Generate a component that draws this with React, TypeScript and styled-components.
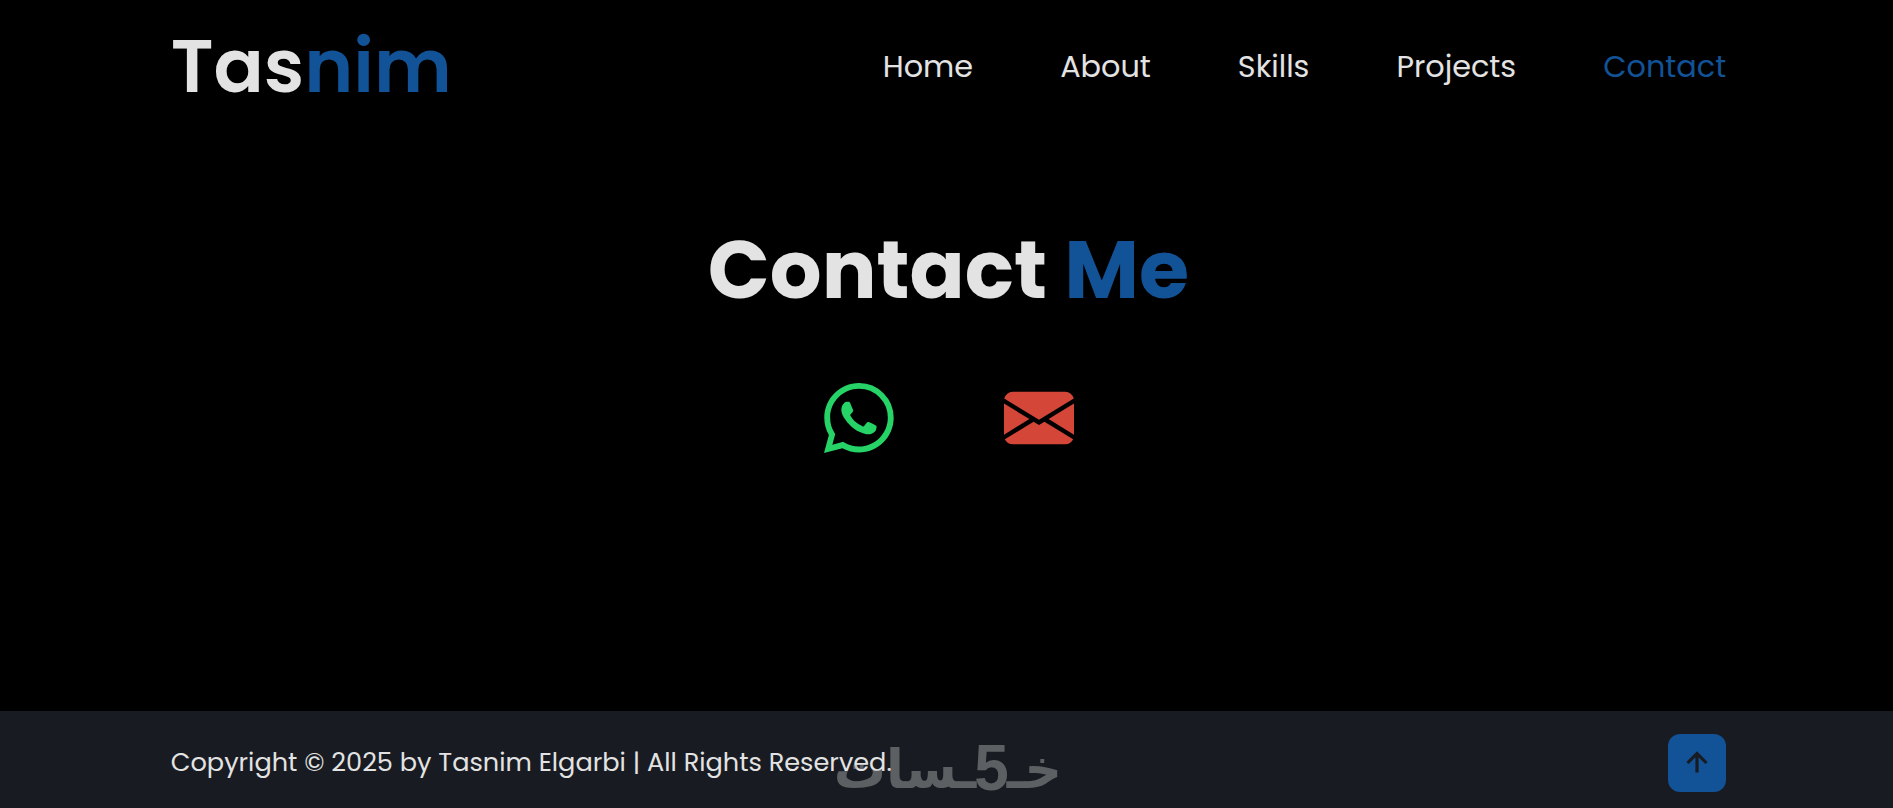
import styled, { createGlobalStyle } from "styled-components";
import { BsEnvelopeFill, BsWhatsapp } from "react-icons/bs";
import { BiUpArrowAlt } from "react-icons/bi";

const colors = {
  bg: "#000",
  footer: "#181b22",
  text: "#e3e3e3",
  main: "#125296",
  whatsapp: "#25d366",
  mail: "#d44638",
};

const links = ["Home", "About", "Skills", "Projects", "Contact"];

const App = () => {
  return (
    <>
      <GlobalStyle />
      <Page>
        <Header>
          <Logo>
            Tas<Accent>nim</Accent>
          </Logo>
          <Nav>
            {links.map((label) => (
              <NavLink
                key={label}
                href={`#${label.toLowerCase()}`}
                $active={label === "Contact"}
              >
                {label}
              </NavLink>
            ))}
          </Nav>
        </Header>

        <Contact id="contact">
          <Heading>
            Contact <Accent>Me</Accent>
          </Heading>
          <Socials>
            <SocialLink href="#whatsapp" aria-label="WhatsApp" $color={colors.whatsapp}>
              <BsWhatsapp />
            </SocialLink>
            <SocialLink href="#mail" aria-label="Email" $color={colors.mail}>
              <BsEnvelopeFill />
            </SocialLink>
          </Socials>
        </Contact>

        <Footer>
          <Copyright>
            Copyright © 2025 by Tasnim Elgarbi | All Rights Reserved.
          </Copyright>
          <TopButton href="#home" aria-label="Back to top">
            <BiUpArrowAlt />
          </TopButton>
          <Watermark dir="rtl" lang="ar">
            <span>خـ</span>
            <Five>5</Five>
            <span>ـسات</span>
          </Watermark>
        </Footer>
      </Page>
    </>
  );
};

export default App;

const GlobalStyle = createGlobalStyle`
  * {
    box-sizing: border-box;
    margin: 0;
    padding: 0;
    text-decoration: none;
  }

  body {
    background: ${colors.bg};
    color: ${colors.text};
    font-family: Poppins, Inter, "Liberation Sans", sans-serif;
    overflow: hidden;
  }
`;

const Page = styled.div`
  display: flex;
  flex-direction: column;
  width: 1897px;
  height: 100vh;
`;

const Header = styled.header`
  display: flex;
  justify-content: space-between;
  align-items: center;
  height: 132px;
  padding: 0 9%;
`;

const Logo = styled.a`
  font-size: 74.2px;
  font-weight: 600;
  line-height: 1;
`;

const Accent = styled.span`
  color: ${colors.main};
`;

const Nav = styled.nav`
  display: flex;
  gap: 87px;
`;

const NavLink = styled.a<{ $active?: boolean }>`
  color: ${({ $active }) => ($active ? colors.main : colors.text)};
  font-size: 30.3px;
  line-height: 45px;
`;

const Contact = styled.section`
  display: flex;
  flex: 1;
  flex-direction: column;
  align-items: center;
  padding-top: 80px;
`;

const Heading = styled.h2`
  font-size: 81.4px;
  font-weight: 700;
  line-height: 116px;
  white-space: nowrap;
`;

const Socials = styled.div`
  display: flex;
  gap: 110px;
  margin-top: 55px;
  padding-left: 1px;
`;

const SocialLink = styled.a<{ $color: string }>`
  display: flex;
  color: ${({ $color }) => $color};
  font-size: 70px;
`;

const Footer = styled.footer`
  position: relative;
  display: flex;
  justify-content: space-between;
  align-items: center;
  height: 97px;
  padding: 6px 9% 0;
  background: ${colors.footer};
`;

const Copyright = styled.p`
  padding-bottom: 2px;
  font-size: 25.6px;
  line-height: 38px;
  white-space: nowrap;
`;

const TopButton = styled.a`
  display: flex;
  align-items: center;
  justify-content: center;
  width: 58px;
  height: 58px;
  border-radius: 12px;
  background: ${colors.main};
  color: ${colors.footer};
  font-size: 38px;
`;

/* translucent mark stamped over the footer text */
const Watermark = styled.div`
  position: absolute;
  top: 25px;
  left: 833px;
  display: flex;
  align-items: baseline;
  width: 229px;
  color: #a2a5a2;
  font-family: "DejaVu Sans", sans-serif;
  font-size: 52px;
  font-weight: 700;
  line-height: 60px;
  opacity: 0.5;
  white-space: nowrap;
  pointer-events: none;
  transform: scaleY(1.05);
`;

const Five = styled.span`
  margin: 0 -2px;
  font-family: "Liberation Sans", sans-serif;
  font-size: 62px;
  transform: translateY(2px);
`;
